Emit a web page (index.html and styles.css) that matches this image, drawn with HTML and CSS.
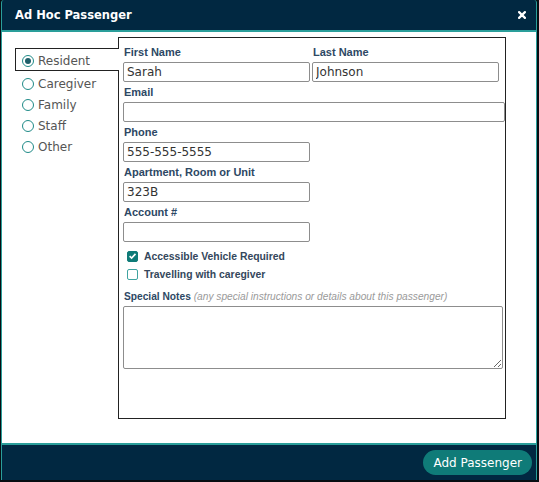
FILE: index.html
```html
<!DOCTYPE html>
<html>
<head>
  <title>Ad Hoc Passenger</title>
  <link rel="stylesheet" href="styles.css">
</head>
<body>
  <div class="dialog">
    <header class="dialog-head">
      <h1 class="dialog-title">Ad Hoc Passenger</h1>
      <button class="close-btn" type="button" aria-label="Close">
        <svg width="8" height="8" viewBox="0 0 8 8"><path d="M1.1 1.1L6.9 6.9M6.9 1.1L1.1 6.9" stroke="#fff" stroke-width="2.2" stroke-linecap="round"/></svg>
      </button>
    </header>

    <div class="dialog-body">
      <!-- passenger type picker, active one joins the form panel -->
      <ul class="type-tabs">
        <li class="type-tab active"><span class="radio on"></span>Resident</li>
        <li class="type-tab"><span class="radio"></span>Caregiver</li>
        <li class="type-tab"><span class="radio"></span>Family</li>
        <li class="type-tab"><span class="radio"></span>Staff</li>
        <li class="type-tab"><span class="radio"></span>Other</li>
      </ul>

      <form class="passenger-form">
        <div class="name-row">
          <div class="field">
            <label>First Name</label>
            <input type="text" value="Sarah">
          </div>
          <div class="field">
            <label>Last Name</label>
            <input type="text" value="Johnson">
          </div>
        </div>
        <div class="field">
          <label>Email</label>
          <input type="text" class="wide">
        </div>
        <div class="field">
          <label>Phone</label>
          <input type="text" value="555-555-5555">
        </div>
        <div class="field">
          <label>Apartment, Room or Unit</label>
          <input type="text" value="323B">
        </div>
        <div class="field">
          <label>Account #</label>
          <input type="text">
        </div>

        <div class="checks">
          <div class="check-row">
            <span class="check on"><svg width="10" height="10" viewBox="0 0 10 10"><path d="M1.8 5.2L4 7.3L8.3 2.6" fill="none" stroke="#fff" stroke-width="1.8"/></svg></span>
            Accessible Vehicle Required
          </div>
          <div class="check-row">
            <span class="check"></span>
            Travelling with caregiver
          </div>
        </div>

        <div class="field notes">
          <label>Special Notes <em>(any special instructions or details about this passenger)</em></label>
          <textarea></textarea>
        </div>
      </form>
    </div>

    <footer class="dialog-foot">
      <button class="add-btn" type="button">Add Passenger</button>
    </footer>
  </div>
</body>
</html>
```

FILE: styles.css
```css
:root {
  --navy: #012841;
  --teal: #2a9e9a;
  --teal-dark: #0f7b78;
  --label: #2d4864;
}

body {
  margin: 0;
  padding: 0 2px 2px 1px;
  background-color: #070d12;
  font-family: "DejaVu Sans", Verdana, sans-serif;
}

.dialog {
  height: 480px;
  display: flex;
  flex-direction: column;
  border-left: 1px solid var(--teal);
  border-right: 1px solid var(--teal);
  border-top-left-radius: 3px;
  border-top-right-radius: 3px;
  background-color: var(--navy);
}

.dialog-head {
  height: 30px;
  flex: none;
  display: flex;
  align-items: center;
  justify-content: space-between;
  padding: 0 10px 0 13px;
  border-bottom: 2px solid var(--teal);
}

.dialog-title {
  margin: 0;
  color: #fff;
  font-size: 11.5px;
  font-weight: bold;
}

.close-btn {
  border: none;
  background: none;
  padding: 0;
  display: flex;
  cursor: pointer;
}

.dialog-body {
  flex: 1;
  display: flex;
  align-items: flex-start;
  padding: 5px 0 0 13px;
  background-color: #fff;
}

/* left column of radio tabs */
.type-tabs {
  list-style: none;
  margin: 11px 0 0;
  padding: 0;
  flex: 0 0 103px;
}

.type-tab {
  display: flex;
  align-items: center;
  height: 21px;
  padding-left: 7px;
  font-size: 12px;
  color: #555;
}

.type-tab.active {
  position: relative;
  z-index: 1;
  height: 18px;
  padding: 3px 0 0 6px;
  margin-right: -1px;
  border: 1px solid #222;
  border-right: none;
  background-color: #fff;
}

.type-tab.active + .type-tab {
  margin-top: 2px;
}

.radio {
  flex: none;
  width: 10px;
  height: 10px;
  margin-right: 4px;
  border: 1.5px solid #1f8b88;
  border-radius: 50%;
  display: flex;
  align-items: center;
  justify-content: center;
}

.radio.on::after {
  content: "";
  width: 6px;
  height: 6px;
  border-radius: 50%;
  background-color: #1f5f6a;
}

/* the form panel */
.passenger-form {
  width: 388px;
  height: 382px;
  box-sizing: border-box;
  border: 1px solid #222;
  padding: 7px 0 0 4px;
}

.name-row {
  display: grid;
  grid-template-columns: 187px 187px;
  column-gap: 2px;
}

.field {
  margin-bottom: 3px;
}

.field label {
  display: block;
  height: 14px;
  line-height: 14px;
  margin-bottom: 3px;
  padding-left: 1px;
  font-family: "Liberation Sans", Arial, sans-serif;
  font-size: 11px;
  font-weight: bold;
  color: var(--label);
}

.field input {
  display: block;
  width: 187px;
  height: 20px;
  box-sizing: border-box;
  margin: 0;
  padding: 0 3px;
  border: 1px solid #8d8d8d;
  border-radius: 2px;
  font-family: "DejaVu Sans", Verdana, sans-serif;
  font-size: 12px;
  color: #333;
}

.field input.wide {
  width: 100%;
}

.checks {
  padding: 2px 0 0 4px;
}

.check-row {
  display: flex;
  align-items: center;
  height: 18px;
  font-family: "Liberation Sans", Arial, sans-serif;
  font-size: 10.4px;
  font-weight: bold;
  color: #34475c;
}

.check {
  flex: none;
  width: 9px;
  height: 9px;
  margin-right: 6px;
  border: 1.5px solid #3fa3a0;
  border-radius: 2px;
  display: flex;
  align-items: center;
  justify-content: center;
}

.check.on {
  background-color: var(--teal-dark);
  border-color: var(--teal-dark);
}

.notes {
  margin-top: 7px;
}

.notes label {
  margin-bottom: 2px;
  font-size: 10.2px;
}

.notes em {
  font-weight: normal;
  color: #9a9a9a;
}

textarea {
  display: block;
  width: 380px;
  height: 63px;
  box-sizing: border-box;
  margin: 0;
  border: 1px solid #8d8d8d;
  border-radius: 2px;
}

.dialog-foot {
  height: 35px;
  flex: none;
  display: flex;
  align-items: center;
  justify-content: flex-end;
  padding-right: 4px;
  border-top: 2px solid var(--teal);
}

.add-btn {
  height: 25px;
  padding: 0 10px;
  border: none;
  border-radius: 13px;
  background-color: var(--teal-dark);
  color: #fff;
  font-family: "DejaVu Sans", Verdana, sans-serif;
  font-size: 12px;
  cursor: pointer;
}
```
